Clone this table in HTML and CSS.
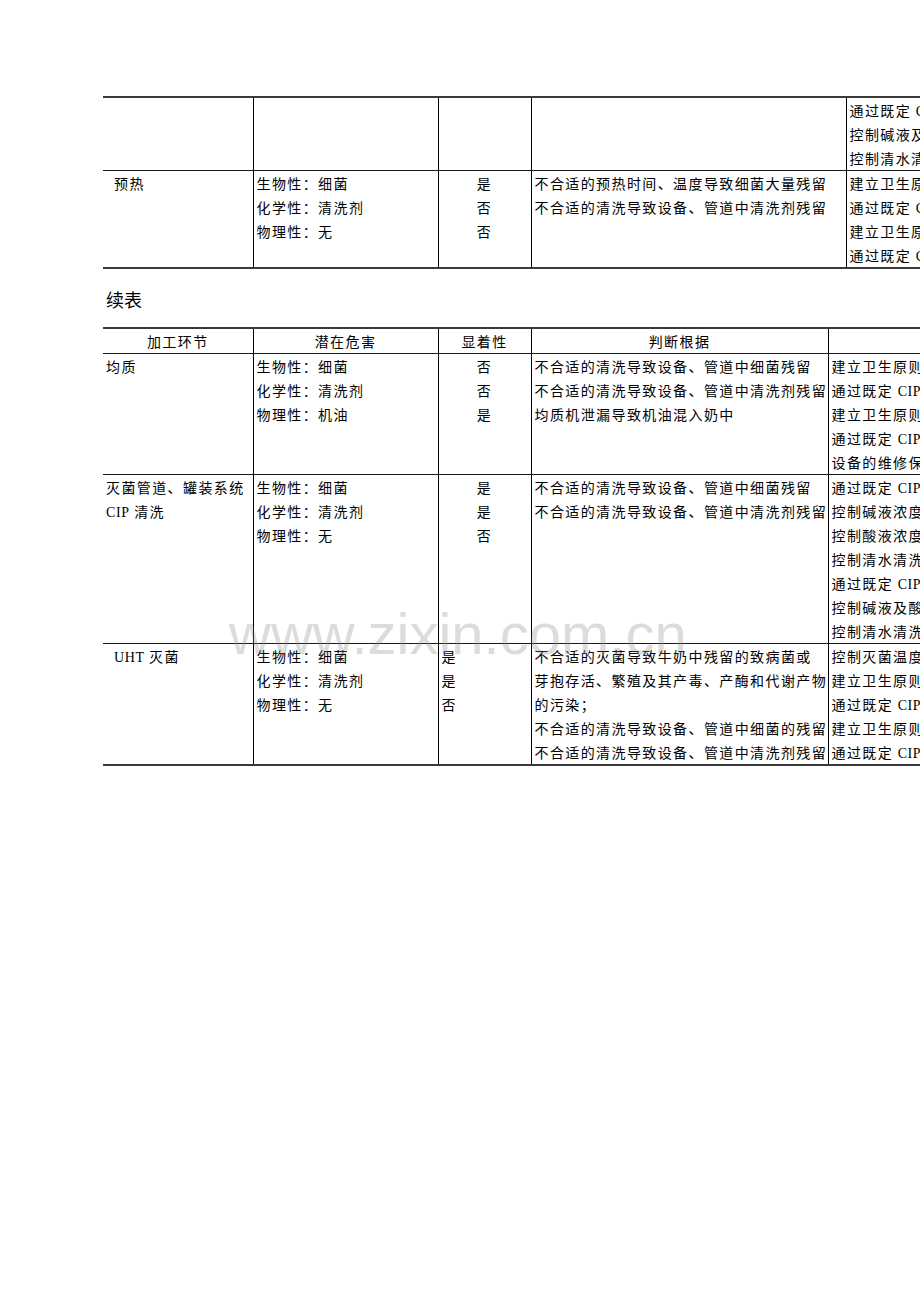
FILE: index.html
```html
<!DOCTYPE html>
<html lang="zh-CN">
<head>
<meta charset="utf-8">
<title>续表</title>
<link rel="stylesheet" href="styles.css">
</head>
<body>
<div class="page">
  <table class="grid grid-a">
    <colgroup>
      <col class="c1"><col class="c2"><col class="c3"><col class="c4a"><col class="c5">
    </colgroup>
    <tr class="r3">
      <td></td>
      <td></td>
      <td></td>
      <td></td>
      <td>通过既定 <span class="lat">CIP</span> 程序清洗<br>控制碱液及酸液浓度<br>控制清水清洗时间</td>
    </tr>
    <tr>
      <td><span class="indent">预热</span></td>
      <td>生物性：细菌<br>化学性：清洗剂<br>物理性：无</td>
      <td class="mid">是<br>否<br>否</td>
      <td>不合适的预热时间、温度导致细菌大量残留<br>不合适的清洗导致设备、管道中清洗剂残留</td>
      <td>建立卫生原则<br>通过既定 <span class="lat">CIP</span> 程序清洗<br>建立卫生原则<br>通过既定 <span class="lat">CIP</span> 程序清洗</td>
    </tr>
  </table>

  <div class="caption">续表</div>

  <table class="grid grid-b">
    <colgroup>
      <col class="c1"><col class="c2"><col class="c3"><col class="c4b"><col class="c5">
    </colgroup>
    <tr>
      <td class="mid">加工环节</td>
      <td class="mid">潜在危害</td>
      <td class="mid">显着性</td>
      <td class="mid">判断根据</td>
      <td class="mid">预防措施</td>
    </tr>
    <tr>
      <td>均质</td>
      <td>生物性：细菌<br>化学性：清洗剂<br>物理性：机油</td>
      <td class="mid">否<br>否<br>是</td>
      <td>不合适的清洗导致设备、管道中细菌残留<br>不合适的清洗导致设备、管道中清洗剂残留<br>均质机泄漏导致机油混入奶中</td>
      <td>建立卫生原则<br>通过既定 <span class="lat">CIP</span> 程序清洗<br>建立卫生原则<br>通过既定 <span class="lat">CIP</span> 程序清洗<br>设备的维修保养</td>
    </tr>
    <tr>
      <td>灭菌管道、罐装系统<br><span class="lat">CIP</span> 清洗</td>
      <td>生物性：细菌<br>化学性：清洗剂<br>物理性：无</td>
      <td class="mid">是<br>是<br>否</td>
      <td>不合适的清洗导致设备、管道中细菌残留<br>不合适的清洗导致设备、管道中清洗剂残留</td>
      <td>通过既定 <span class="lat">CIP</span> 程序清洗<br>控制碱液浓度<br>控制酸液浓度<br>控制清水清洗时间<br>通过既定 <span class="lat">CIP</span> 程序清洗<br>控制碱液及酸液浓度<br>控制清水清洗时间</td>
    </tr>
    <tr>
      <td><span class="indent"><span class="lat">UHT</span> 灭菌</span></td>
      <td>生物性：细菌<br>化学性：清洗剂<br>物理性：无</td>
      <td>是<br>是<br>否</td>
      <td>不合适的灭菌导致牛奶中残留的致病菌或<br>芽抱存活、繁殖及其产毒、产酶和代谢产物<br>的污染；<br>不合适的清洗导致设备、管道中细菌的残留<br>不合适的清洗导致设备、管道中清洗剂残留</td>
      <td>控制灭菌温度<br>建立卫生原则<br>通过既定 <span class="lat">CIP</span> 程序清洗<br>建立卫生原则<br>通过既定 <span class="lat">CIP</span> 程序清洗</td>
    </tr>
  </table>
</div>
<div class="watermark">www.zixin.com.cn</div>
</body>
</html>
```

FILE: styles.css
```css
html, body {
  margin: 0;
  padding: 0;
  background: #fff;
  overflow: hidden;
}

body {
  position: relative;
  width: 920px;
  height: 1302px;
  font-family: "Noto Sans CJK SC", "Liberation Serif", sans-serif;
  font-size: 14px;
  letter-spacing: 1.4px;
  color: #000;
}

.lat {
  font-family: "Liberation Serif", serif;
  line-height: 1;
  letter-spacing: 0.6px;
}

.page {
  padding: 96px 0 0 103px;
}

.grid {
  border-collapse: collapse;
  table-layout: fixed;
  border-top: 2px solid #3a3a3a;
  border-bottom: 2px solid #3a3a3a;
}

.grid-a { width: 1143px; }
.grid-b { width: 1125px; }

.c1 { width: 150px; }
.c2 { width: 185px; }
.c3 { width: 93px; }
.c4a { width: 315px; }
.c4b { width: 297px; }
.c5 { width: 400px; }

.grid td {
  padding: 0 0 0 3px;
  vertical-align: top;
  line-height: 24px;
  white-space: nowrap;
  overflow: hidden;
  border-left: 1px solid #000;
  border-top: 1px solid #1a1a1a;
  border-bottom: 1px solid #1a1a1a;
}

.grid td:first-child {
  border-left: none;
}

.grid .r3 td {
  height: 72px;
}

.grid td.mid {
  text-align: center;
  padding-left: 0;
}

.indent {
  padding-left: 8px;
}

.caption {
  font-size: 18px;
  line-height: 24px;
  letter-spacing: 0;
  padding-left: 3px;
  margin: 18px 0 16px;
}

.watermark {
  position: absolute;
  left: 229px;
  top: 605px;
  font-family: "Liberation Sans", Arial, sans-serif;
  font-size: 58px;
  line-height: 58px;
  letter-spacing: 0;
  color: rgba(140, 140, 140, 0.3);
  pointer-events: none;
}
```
